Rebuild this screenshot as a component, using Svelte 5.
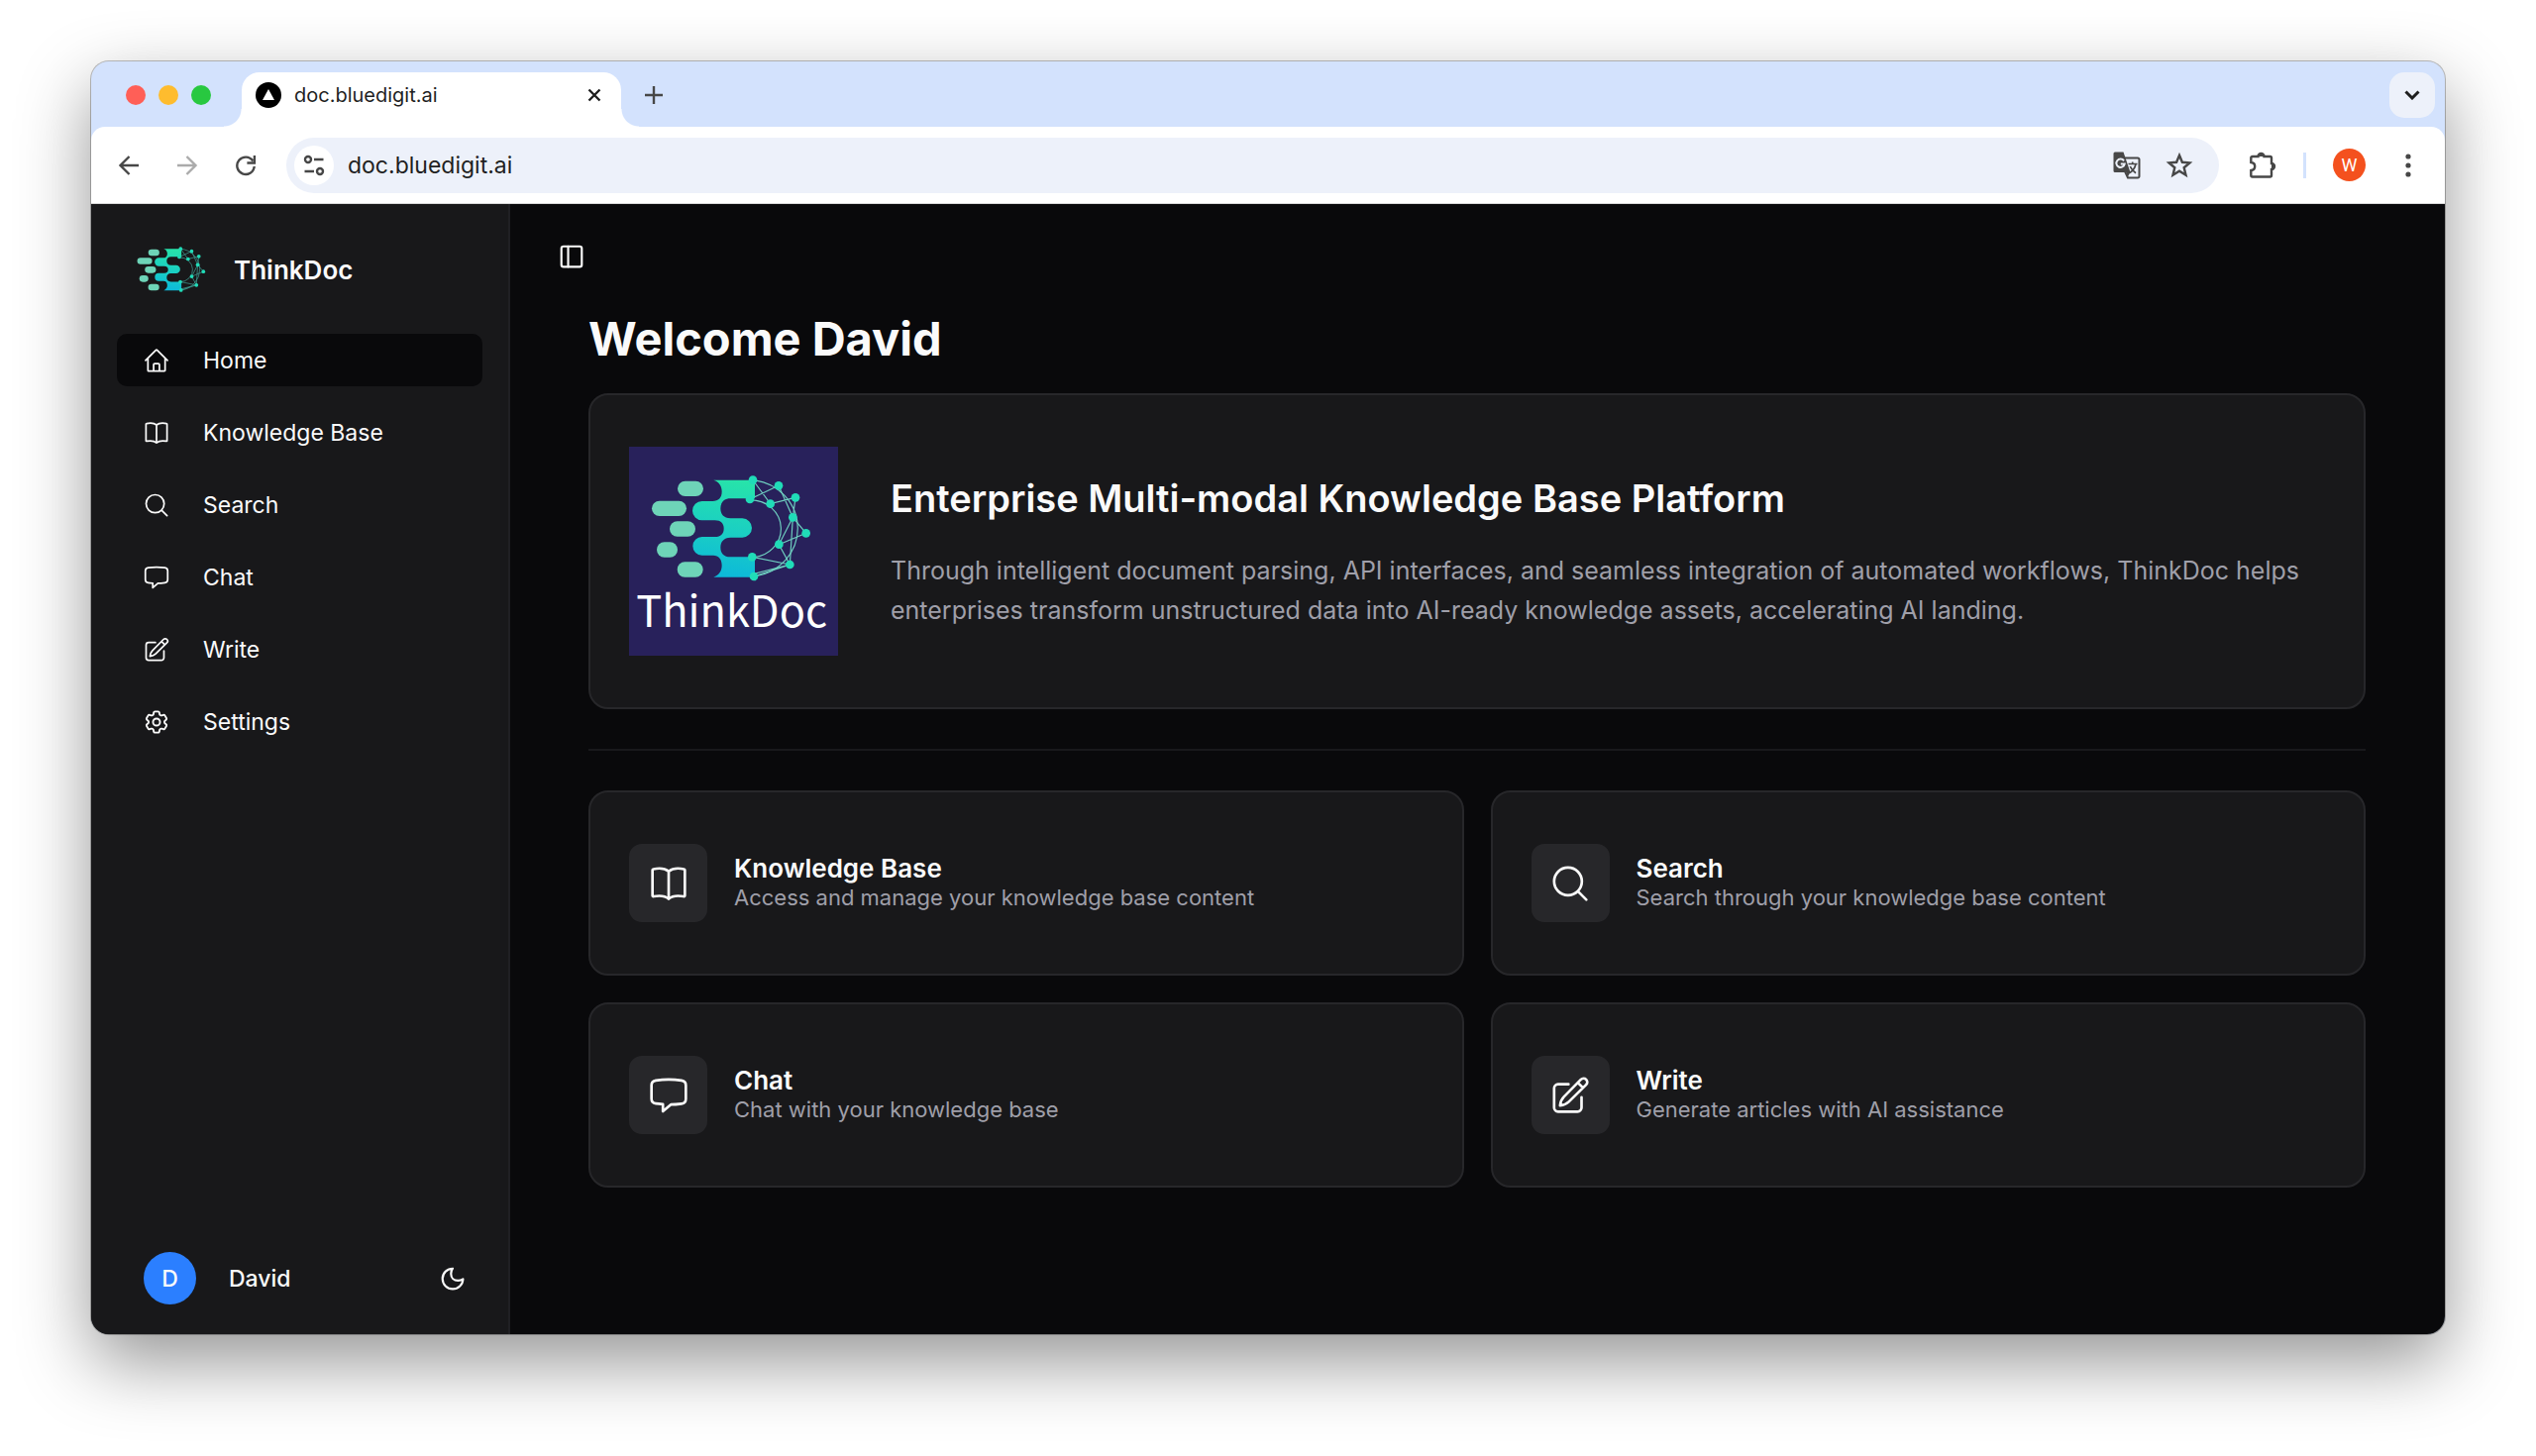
<script>
	let active = 'Home';

	const nav = [
		{ label: 'Home', icon: 'home' },
		{ label: 'Knowledge Base', icon: 'book' },
		{ label: 'Search', icon: 'search' },
		{ label: 'Chat', icon: 'chat' },
		{ label: 'Write', icon: 'write' },
		{ label: 'Settings', icon: 'gear' }
	];

	const cards = [
		{ title: 'Knowledge Base', text: 'Access and manage your knowledge base content', icon: 'book' },
		{ title: 'Search', text: 'Search through your knowledge base content', icon: 'search' },
		{ title: 'Chat', text: 'Chat with your knowledge base', icon: 'chat' },
		{ title: 'Write', text: 'Generate articles with AI assistance', icon: 'write' }
	];

	// 24x24 outline icons
	const icons = {
		home: 'M1.8 11.8 11.3 2.4a1 1 0 0 1 1.4 0l9.5 9.4M4 9.8V21.2a.7.7 0 0 0 .7.7h14.6a.7.7 0 0 0 .7-.7V9.8M9.3 21.8v-6a1 1 0 0 1 1-1h3.4a1 1 0 0 1 1 1v6',
		book: 'M12 4.6C10 3 6 2.6 2.7 3.3a.6.6 0 0 0-.5.6v15.4c0 .4.3.6.7.5C6.3 19.2 10 19.5 12 21.3M12 4.6C14 3 18 2.6 21.3 3.3a.6.6 0 0 1 .5.6v15.4c0 .4-.3.6-.7.5C17.7 19.2 14 19.5 12 21.3M12 4.6v16.7',
		search: 'M19.1 10.7a8.4 8.4 0 1 1-16.8 0a8.4 8.4 0 0 1 16.8 0ZM16.7 16.7l5.1 5.1',
		chat: 'M4.2 2.9C9.4 2.2 14.6 2.2 19.8 2.9c1.5.2 2.6 1.4 2.6 2.9v8.3c0 1.5-1.1 2.7-2.6 2.9-2.3.3-4.2.5-6.500.5L8.5 21.600v-4.300C7 17.200 5.600 17.100 4.200 16.900 2.700 16.700 1.600 15.500 1.600 14V5.800c0-1.500 1.100-2.700 2.600-2.900Z',
		write: 'M11 5.2H4.7A2.4 2.4 0 0 0 2.3 7.6v11.8a2.4 2.4 0 0 0 2.4 2.4h11.8a2.4 2.4 0 0 0 2.4-2.4v-6.3M5.9 18.1c.2-2 .8-3.8 2.3-5.3L18.5 2.3a2.2 2.2 0 0 1 3.2 3.2L11.2 15.8c-1.5 1.5-3.3 2.1-5.3 2.3ZM16.7 4.3l3 3',
		gear: 'M9.594 3.94c.09-.542.56-.94 1.11-.94h2.593c.55 0 1.02.398 1.11.94l.213 1.281c.063.374.313.686.645.87.074.04.147.083.22.127.325.196.72.257 1.075.124l1.217-.456a1.125 1.125 0 0 1 1.37.49l1.296 2.247a1.125 1.125 0 0 1-.26 1.431l-1.003.827c-.293.241-.438.613-.43.992a7.723 7.723 0 0 1 0 .255c-.008.378.137.75.43.991l1.004.827c.424.35.534.955.26 1.43l-1.298 2.247a1.125 1.125 0 0 1-1.369.491l-1.217-.456c-.355-.133-.75-.072-1.076.124a6.47 6.47 0 0 1-.22.128c-.331.183-.581.495-.644.869l-.213 1.281c-.09.543-.56.94-1.11.94h-2.594c-.55 0-1.019-.398-1.11-.94l-.213-1.281c-.062-.374-.312-.686-.644-.87a6.52 6.52 0 0 1-.22-.127c-.325-.196-.72-.257-1.076-.124l-1.217.456a1.125 1.125 0 0 1-1.369-.49l-1.297-2.247a1.125 1.125 0 0 1 .26-1.431l1.004-.827c.292-.24.437-.613.43-.991a6.932 6.932 0 0 1 0-.255c.007-.38-.138-.751-.43-.992l-1.004-.827a1.125 1.125 0 0 1-.26-1.43l1.297-2.247a1.125 1.125 0 0 1 1.37-.491l1.216.456c.356.133.751.072 1.076-.124.072-.044.146-.086.22-.128.332-.183.582-.495.644-.869l.214-1.28ZM15 12a3 3 0 1 1-6 0a3 3 0 0 1 6 0Z'
	};

	const nodes = [
		[540, 287], [531, 345], [618, 304], [669, 340], [593, 359], [661, 400],
		[701, 448], [619, 482], [652, 543], [538, 520], [543, 579]
	];
</script>

{#snippet icon(name)}
	<svg class="icon" viewBox={name === 'gear' ? '1 1 22 22' : '0 0 24 24'} aria-hidden="true"><path d={icons[name]} /></svg>
{/snippet}

{#snippet mark(id)}
	<defs>
		<linearGradient {id} x1="480" y1="287" x2="430" y2="581" gradientUnits="userSpaceOnUse">
			<stop offset="0" stop-color="#27e3aa" />
			<stop offset="0.5" stop-color="#1bd0c2" />
			<stop offset="1" stop-color="#0cb8da" />
		</linearGradient>
	</defs>
	<g fill="#6ed4b8">
		<rect x="312" y="290" width="78" height="46" rx="23" />
		<rect x="234" y="350" width="105" height="46" rx="23" />
		<rect x="288" y="412" width="78" height="46" rx="23" />
		<rect x="249" y="475" width="63" height="46" rx="23" />
		<rect x="311" y="535" width="78" height="46" rx="23" />
	</g>
	<g class="web">
		<path d="M540 287A152 147 0 0 1 543 579M531 348A90 86 0 0 1 538 521" />
		<path d="M540 287 593 359 669 340M531 345 618 304 661 400 701 448 619 482 652 543 538 520M669 340 661 400 652 543 543 579M661 400 619 482M543 571 652 543M540 287 531 345" />
	</g>
	<path
		fill="url(#{id})"
		d="M421 287H546V343H472C452 343 442 356 442 373S452 403 472 403H508A29 29 0 0 1 508 461H472C452 461 442 474 442 491S452 520 472 520H546V581H421C438 574 446 562 446 545C446 526 436 515 420 515H386A28 28 0 0 1 386 459H425C443 459 452 449 452 434S443 409 425 409H386A29 29 0 0 1 386 351H418C436 351 446 341 446 322C446 305 438 293 421 287Z"
	/>
	<g fill="#20dcb8">
		{#each nodes as [x, y]}
			<circle cx={x} cy={y} r="13" />
		{/each}
	</g>
{/snippet}

<div class="desktop">
	<div class="window">
		<div class="tabs">
			<div class="lights"><i class="red"></i><i class="yellow"></i><i class="green"></i></div>
			<div class="tab">
				<svg class="favicon" viewBox="0 0 26 26" aria-hidden="true"><circle cx="13" cy="13" r="13" /><path d="M13 7 19 18H7Z" fill="#fff" /></svg>
				<span>doc.bluedigit.ai</span>
				<button aria-label="Close tab">
					<svg viewBox="0 0 14 14" width="14" height="14"><path d="M1.5 1.5l11 11M12.5 1.5l-11 11" stroke="#1f1f1f" stroke-width="2.4" /></svg>
				</button>
			</div>
			<button class="new-tab" aria-label="New tab">
				<svg viewBox="0 0 18 18" width="18" height="18"><path d="M9 0v18M0 9h18" stroke="#474747" stroke-width="2.4" /></svg>
			</button>
			<button class="tab-list" aria-label="Search tabs">
				<svg viewBox="0 0 16 10" width="16" height="10"><path d="M1.5 1.5 8 8l6.5-6.5" fill="none" stroke="#1f1f1f" stroke-width="3" /></svg>
			</button>
		</div>

		<div class="toolbar">
			<button aria-label="Back">
				<svg viewBox="0 0 20 20"><path d="M20 10H2M10.5 1l-9 9 9 9" /></svg>
			</button>
			<button class="off" aria-label="Forward">
				<svg viewBox="0 0 20 20"><path d="M0 10h18M9.5 1l9 9-9 9" /></svg>
			</button>
			<button aria-label="Reload">
				<svg viewBox="0 0 20 20"><path d="M17.3 5.5A8.7 8.7 0 1 0 18.7 11M18.9 0v7.5h-7.5" /></svg>
			</button>
			<div class="omnibox">
				<button class="site" aria-label="Site information">
					<svg viewBox="0 0 20 20"><circle cx="4" cy="4" r="3" /><circle cx="16" cy="16" r="3" /><path d="M10 4h9.5M.5 16H10" /></svg>
				</button>
				<input aria-label="Address" value="doc.bluedigit.ai" />
				<button aria-label="Translate">
					<svg class="translate" viewBox="0 0 28 28">
						<path d="M12 6.5h13a1.5 1.5 0 0 1 1.5 1.5v17a1.5 1.5 0 0 1-1.5 1.5H15L12 20" stroke-width="2" />
						<path d="M2 .5h8.5L17.5 21H2A1.5 1.5 0 0 1 .5 19.500V2A1.5 1.5 0 0 1 2 .5Z" fill="#474747" stroke="none" />
						<path d="M13.5 21h4l-3.3 5.5Z" fill="#474747" stroke="none" />
						<path d="M11 9.3A4.2 4.2 0 1 0 11.7 12.5H7.8" stroke="#edf1fa" stroke-width="2" />
						<path d="M15.5 12.5h9M19.7 10.5v2M23 12.5c-.8 4-3.2 7-6 9M17.3 15c1 2.5 3.3 5 5.7 6.7" stroke-width="1.7" />
					</svg>
				</button>
				<button aria-label="Bookmark this tab">
					<svg class="star" viewBox="0 0 26 26"><path d="M13 2.8l2.9 7 7.5.6-5.7 4.9 1.8 7.4-6.5-4-6.5 4 1.8-7.4-5.7-4.9 7.5-.6Z" /></svg>
				</button>
			</div>
			<button aria-label="Extensions">
				<svg class="puzzle" viewBox="0 0 28 28"><path d="M3.8 5H9.5A3 3 0 0 1 15.5 5H21.5A1.5 1.5 0 0 1 23 6.5V12A3 3 0 0 1 23 18V24A1.5 1.5 0 0 1 21.5 25.5H3.8A1.5 1.5 0 0 1 2.3 24V19C7.5 18.5 7.5 11.500 2.3 11V6.5A1.5 1.5 0 0 1 3.8 5Z" /><path d="M9.5 5a3 3 0 0 1 6 0ZM23 12a3 3 0 0 1 0 6Z" fill="#474747" stroke="none" /></svg>
			</button>
			<span class="divider"></span>
			<button class="profile" aria-label="Profile">W</button>
			<button aria-label="Menu">
				<svg class="dots" viewBox="0 0 6 24"><circle cx="3" cy="3" r="2.6" /><circle cx="3" cy="12" r="2.6" /><circle cx="3" cy="21" r="2.6" /></svg>
			</button>
		</div>

		<div class="app">
			<aside>
				<a class="brand" href="#home">
					<svg viewBox="230 270 490 325" aria-hidden="true">{@render mark('mark-small')}</svg>
					<span>ThinkDoc</span>
				</a>
				<nav>
					{#each nav as item}
						<a href="#{item.icon}" class:active={active === item.label} onclick={() => (active = item.label)}>
							{@render icon(item.icon)}
							<span>{item.label}</span>
						</a>
					{/each}
				</nav>
				<div class="user">
					<span class="avatar">D</span>
					<span class="name">David</span>
					<button aria-label="Toggle theme">
						<svg class="icon bold" viewBox="0 0 24 24"><path d="M12 2.5C7 2.5 2.5 6.5 2.5 12S7 21.6 12 21.6s9.6-4.2 9.6-9.3c-1.4 1-2.9 1.5-4.6 1.5-4 0-6.6-2.8-6.6-6.4 0-1.9.6-3.6 1.6-4.9Z" /></svg>
					</button>
				</div>
			</aside>

			<main>
				<button class="toggle" aria-label="Toggle sidebar">
					<svg class="icon bold" viewBox="0 0 24 24"><rect x="2.5" y="2.5" width="19" height="19" rx="2" /><path d="M8.8 2.5v19" /></svg>
				</button>
				<div class="content">
					<h1>Welcome David</h1>
					<section class="hero">
						<svg class="logo" viewBox="165 186 633 633" role="img" aria-label="ThinkDoc logo">
							<rect x="165" y="186" width="633" height="633" fill="#28215b" />
							{@render mark('mark-large')}
							<text x="476" y="731" text-anchor="middle">ThinkDoc</text>
						</svg>
						<div>
							<h2>Enterprise Multi-modal Knowledge Base Platform</h2>
							<p>
								Through intelligent document parsing, API interfaces, and seamless integration of automated workflows, ThinkDoc helps
								enterprises transform unstructured data into AI-ready knowledge assets, accelerating AI landing.
							</p>
						</div>
					</section>
					<hr />
					<div class="cards">
						{#each cards as card}
							<a class="card" href="#{card.icon}">
								<span class="tile">{@render icon(card.icon)}</span>
								<div>
									<h3>{card.title}</h3>
									<p>{card.text}</p>
								</div>
							</a>
						{/each}
					</div>
				</div>
			</main>
		</div>
	</div>
</div>

<style>
	:global(body) {
		margin: 0;
		background: #fff;
	}
	* {
		box-sizing: border-box;
	}
	h1,
	h2,
	h3,
	p {
		margin: 0;
	}
	a {
		color: inherit;
		text-decoration: none;
	}
	button {
		display: flex;
		align-items: center;
		justify-content: center;
		flex: none;
		padding: 0;
		border: 0;
		background: none;
		color: inherit;
		font: inherit;
		cursor: pointer;
	}
	svg {
		display: block;
		flex: none;
	}
	.desktop {
		display: flex;
		min-height: 100vh;
		padding: 62px 92px 123px;
		font-family: Inter, 'Liberation Sans', sans-serif;
	}
	.window {
		display: flex;
		flex-direction: column;
		flex: 1;
		min-width: 0;
		border-radius: 18px;
		overflow: hidden;
		background: #d3e2fd;
		box-shadow:
			0 0 0 1px rgba(0, 0, 0, 0.25),
			0 28px 72px rgba(0, 0, 0, 0.42);
	}

	/* browser chrome */
	.tabs {
		display: flex;
		align-items: flex-end;
		height: 66px;
		padding-right: 10px;
	}
	.lights {
		display: flex;
		gap: 13px;
		width: 152px;
		padding: 0 0 22px 35px;
	}
	.lights i {
		width: 20px;
		height: 20px;
		border-radius: 50%;
	}
	.red {
		background: #ff5f57;
	}
	.yellow {
		background: #febc2e;
	}
	.green {
		background: #28c840;
	}
	.tab {
		position: relative;
		display: flex;
		align-items: center;
		width: 383px;
		height: 55px;
		padding: 0 20px 10px 14px;
		border-radius: 18px 18px 0 0;
		background: #fff;
		font-size: 20px;
		color: #1f1f1f;
	}
	/* flared feet of the tab */
	.tab::before,
	.tab::after {
		content: '';
		position: absolute;
		bottom: 0;
		width: 18px;
		height: 18px;
	}
	.tab::before {
		right: 100%;
		background: radial-gradient(circle at 0 0, transparent 17px, #fff 18px);
	}
	.tab::after {
		left: 100%;
		background: radial-gradient(circle at 100% 0, transparent 17px, #fff 18px);
	}
	.favicon {
		width: 26px;
		height: 26px;
		margin-right: 13px;
	}
	.tab span {
		flex: 1;
	}
	.new-tab {
		width: 36px;
		height: 36px;
		margin: 0 auto 14px 15px;
	}
	.tab-list {
		width: 46px;
		height: 46px;
		margin-bottom: 9px;
		border-radius: 15px;
		background: #edf1fa;
	}
	.toolbar {
		display: flex;
		align-items: center;
		height: 78px;
		padding: 0 19px 0 20px;
		border-radius: 14px 14px 0 0;
		border-bottom: 1px solid #d8d8d8;
		background: #fff;
	}
	.toolbar button {
		width: 36px;
		height: 40px;
		margin-right: 23px;
	}
	.toolbar svg {
		width: 20px;
		height: 20px;
		fill: none;
		stroke: #474747;
		stroke-width: 2.4;
		overflow: visible;
	}
	.toolbar .off {
		opacity: 0.45;
	}
	.omnibox {
		display: flex;
		align-items: center;
		flex: 1;
		height: 56px;
		padding: 0 22px 0 8px;
		border-radius: 28px;
		background: #edf1fa;
	}
	.toolbar .site {
		width: 40px;
		margin-right: 14px;
		border-radius: 50%;
		background: #fff;
	}
	.omnibox input {
		flex: 1;
		min-width: 0;
		padding: 0;
		border: 0;
		outline: 0;
		background: none;
		color: #1f1f1f;
		font: inherit;
		font-size: 23px;
	}
	.omnibox input + button {
		margin-right: 17px;
	}
	.toolbar .translate,
	.toolbar .puzzle {
		width: 28px;
		height: 28px;
	}
	.toolbar .star {
		width: 26px;
		height: 26px;
	}
	.omnibox + button {
		margin-left: 26px;
	}
	.divider {
		width: 3px;
		height: 26px;
		margin-right: 27px;
		background: #d3e2fd;
	}
	.toolbar .profile {
		width: 33px;
		height: 33px;
		margin-right: 25px;
		border-radius: 50%;
		background: #f4511e;
		color: #fff;
		font-family: Roboto, sans-serif;
		font-size: 18px;
	}
	.toolbar button:last-child {
		margin-right: 0;
	}
	.toolbar .dots {
		width: 6px;
		height: 24px;
		fill: #474747;
		stroke: none;
	}

	/* app */
	.app {
		display: flex;
		flex: 1;
		background: #09090b;
		color: #fafafa;
	}
	.icon {
		width: 26px;
		height: 26px;
		fill: none;
		stroke: currentColor;
		stroke-width: 1.6;
		stroke-linecap: round;
		stroke-linejoin: round;
	}
	.bold {
		stroke-width: 2;
	}
	aside {
		display: flex;
		flex-direction: column;
		width: 423px;
		flex: none;
		padding: 26px;
		border-right: 2px solid #202023;
		background: #18181a;
	}
	.brand {
		display: flex;
		align-items: center;
		gap: 28px;
		height: 80px;
		padding-left: 20px;
		font-size: 26px;
		font-weight: 600;
	}
	.brand svg {
		width: 70px;
		height: 48px;
	}
	.web {
		fill: none;
		stroke: #6fcfc0;
		stroke-width: 3.5;
	}
	.brand .web {
		stroke: #3f9c93;
		stroke-width: 5;
	}
	nav {
		display: flex;
		flex-direction: column;
		gap: 20px;
		margin-top: 25px;
	}
	nav a {
		display: flex;
		align-items: center;
		gap: 34px;
		height: 53px;
		padding-left: 27px;
		border-radius: 10px;
		font-size: 23px;
	}
	nav a.active {
		background: #09090b;
	}
	.user {
		display: flex;
		align-items: center;
		margin-top: auto;
		padding: 0 17px 4px 27px;
		font-size: 23px;
		font-weight: 500;
	}
	.avatar {
		display: grid;
		place-items: center;
		width: 53px;
		height: 53px;
		border-radius: 50%;
		background: #2b7fff;
	}
	.name {
		flex: 1;
		margin-left: 33px;
	}
	main {
		flex: 1;
		min-width: 0;
		padding: 40px 80px 40px 49px;
	}
	.content {
		padding-left: 30px;
	}
	h1 {
		margin-top: 40px;
		font-size: 47px;
		line-height: 60px;
		font-weight: 700;
	}
	.hero,
	.card {
		border: 2px solid #27272a;
		border-radius: 20px;
		background: #18181a;
	}
	.hero {
		display: flex;
		align-items: center;
		gap: 53px;
		margin-top: 25px;
		padding: 52px 39px;
	}
	.logo {
		width: 211px;
		height: 211px;
	}
	.logo text {
		fill: #fff;
		font-family: 'Noto Sans CJK SC', sans-serif;
		font-size: 130px;
	}
	h2 {
		font-size: 38px;
		line-height: 53px;
		font-weight: 600;
	}
	p {
		color: #9f9fa9;
	}
	.hero p {
		margin-top: 26px;
		font-size: 25px;
		line-height: 40px;
	}
	hr {
		height: 2px;
		margin: 40px 0;
		border: 0;
		background: #19191c;
	}
	.cards {
		display: grid;
		grid-template-columns: 1fr 1fr;
		gap: 27px;
	}
	.card {
		display: flex;
		align-items: center;
		gap: 27px;
		padding: 52px 39px;
	}
	.tile {
		display: grid;
		place-items: center;
		width: 79px;
		height: 79px;
		border-radius: 13px;
		background: #27272a;
	}
	.tile .icon {
		width: 40px;
		height: 40px;
	}
	h3 {
		font-size: 26px;
		line-height: 29px;
		font-weight: 600;
	}
	.card p {
		font-size: 22px;
		line-height: 30px;
	}
</style>
